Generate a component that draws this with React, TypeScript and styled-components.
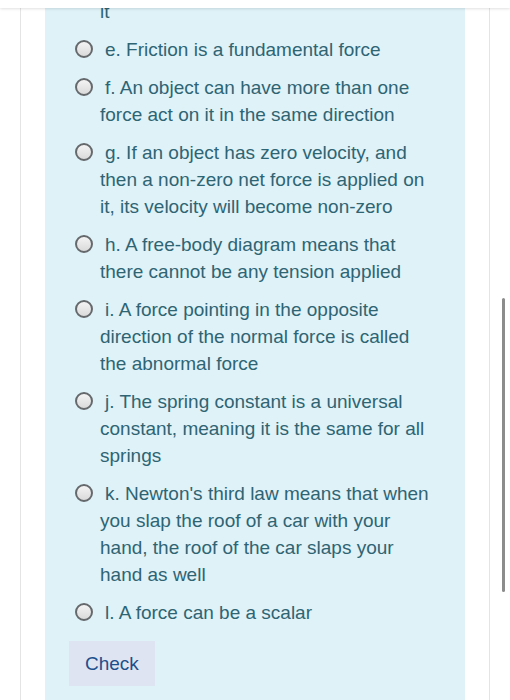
import React from 'react';
import styled, { createGlobalStyle } from 'styled-components';

const GlobalStyle = createGlobalStyle`
  html, body {
    margin: 0;
    padding: 0;
    background: #ffffff;
  }
  body {
    font-family: "Liberation Sans", Arial, Helvetica, sans-serif;
    -webkit-font-smoothing: antialiased;
  }
`;

const Page = styled.div`
  position: relative;
  height: 700px;
  overflow: hidden;
  background: #ffffff;
`;

const HeaderEdge = styled.div`
  position: absolute;
  top: 0;
  left: 0;
  right: 0;
  height: 8px;
  background: #ffffff;
  box-shadow: 0 1px 3px rgba(0, 0, 0, 0.12);
  z-index: 2;
`;

const ScrollThumb = styled.div`
  position: absolute;
  top: 298px;
  right: 5px;
  width: 3px;
  height: 294px;
  border-radius: 2px;
  background: #8c8c8c;
`;

const Card = styled.div`
  margin: -2px 20px 0;
  min-height: 720px;
  border-left: 1px solid #e4e4e4;
  border-right: 1px solid #e4e4e4;
  padding: 0 24px;
`;

const Formulation = styled.div`
  background: #def2f8;
  color: #2f6473;
  min-height: 720px;
  padding: 0 29px 0 24px;
  font-size: 19px;
  line-height: 27px;
`;

const Answers = styled.div`
  padding-left: 6px;
  display: flex;
  flex-direction: column;
  gap: 11px;
`;

const Tail = styled.div`
  padding-left: 25px;
`;

const Option = styled.label`
  display: flex;
  align-items: flex-start;
`;

const Radio = styled.span`
  flex: none;
  box-sizing: border-box;
  width: 18px;
  height: 18px;
  margin: 4px 7px 0 0;
  border-radius: 50%;
  border: 2px solid #66696c;
  background: linear-gradient(#f4f4f4, #dadada);
`;

const Text = styled.div`
  text-indent: 5px;
`;

const CheckButton = styled.button`
  margin-top: 15px;
  padding: 9px 16px;
  border: none;
  border-radius: 0;
  background: #dfe4f3;
  color: #1d4f8a;
  font-family: inherit;
  font-size: 19px;
  line-height: 27px;
`;

const answers = [
  'e. Friction is a fundamental force',
  'f. An object can have more than one force act on it in the same direction',
  'g. If an object has zero velocity, and then a non-zero net force is applied on it, its velocity will become non-zero',
  'h. A free-body diagram means that there cannot be any tension applied',
  'i. A force pointing in the opposite direction of the normal force is called the abnormal force',
  'j. The spring constant is a universal constant, meaning it is the same for all springs',
  "k. Newton's third law means that when you slap the roof of a car with your hand, the roof of the car slaps your hand as well",
  'l. A force can be a scalar',
];

export default function App() {
  return (
    <Page>
      <GlobalStyle />
      <HeaderEdge />
      <Card>
        <Formulation>
          <Answers>
            <Tail>it</Tail>
            {answers.map((a) => (
              <Option key={a}>
                <Radio />
                <Text>{a}</Text>
              </Option>
            ))}
          </Answers>
          <CheckButton>Check</CheckButton>
        </Formulation>
      </Card>
      <ScrollThumb />
    </Page>
  );
}
